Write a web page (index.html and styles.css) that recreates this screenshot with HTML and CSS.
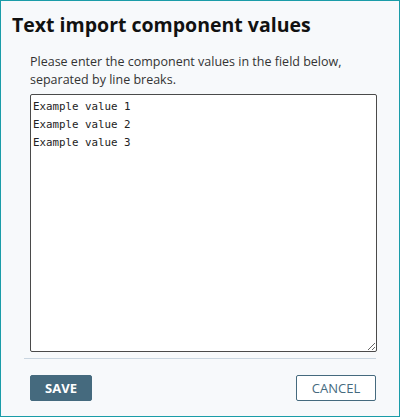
FILE: index.html
```html
<!DOCTYPE html>
<html>
<head>
<meta charset="utf-8">
<link rel="stylesheet" href="styles.css">
</head>
<body>
<div class="dialog">
  <h1 class="title">Text import component values</h1>
  <div class="content">
    <p class="desc">Please enter the component values in the field below, separated by line breaks.</p>
    <textarea class="values">Example value 1
Example value 2
Example value 3</textarea>
  </div>
  <div class="divider"></div>
  <div class="actions">
    <button class="btn btn-primary">SAVE</button>
    <button class="btn btn-secondary">CANCEL</button>
  </div>
</div>
</body>
</html>
```
FILE: styles.css
```css
html, body {
  margin: 0;
  padding: 0;
}
body {
  width: 400px;
  height: 417px;
  font-family: "Open Sans", "Noto Sans", sans-serif;
}
.dialog {
  box-sizing: border-box;
  width: 400px;
  height: 417px;
  border: 1px solid #1a9ca8;
  background: #f7f9fb;
  display: flex;
  flex-direction: column;
}
.title {
  margin: 0;
  padding: 11px 0 0 11px;
  font-size: 19.5px;
  line-height: 26px;
  font-weight: 700;
  color: #111;
}
.content {
  padding: 0 23px 0 29px;
}
.desc {
  margin: 15px 0 0 0;
  font-size: 12.5px;
  line-height: 18px;
  color: #333;
}
.values {
  display: block;
  box-sizing: border-box;
  margin-top: 5px;
  width: 347px;
  height: 258px;
  border: 1px solid #4a4a4a;
  border-radius: 2px;
  background: #fff;
  padding: 3px 2px 1px;
  font-family: "DejaVu Sans Mono", "Liberation Mono", monospace;
  font-size: 10.8px;
  line-height: 18px;
  color: #222;
  resize: vertical;
}
.divider {
  margin: 6px 23px 0 23px;
  height: 1px;
  background: #c9d5e0;
}
.actions {
  display: flex;
  justify-content: space-between;
  padding: 16px 23px 0 29px;
}
.btn {
  box-sizing: border-box;
  height: 26px;
  border-radius: 2px;
  font-family: "Open Sans", "Noto Sans", sans-serif;
  font-size: 13px;
  padding: 0;
  cursor: pointer;
}
.btn-primary {
  width: 62px;
  background: #456a7e;
  border: 1px solid #456a7e;
  color: #fff;
  font-weight: 700;
}
.btn-secondary {
  width: 80px;
  background: #fff;
  border: 1px solid #456a7e;
  color: #456a7e;
  font-weight: 400;
}
```
